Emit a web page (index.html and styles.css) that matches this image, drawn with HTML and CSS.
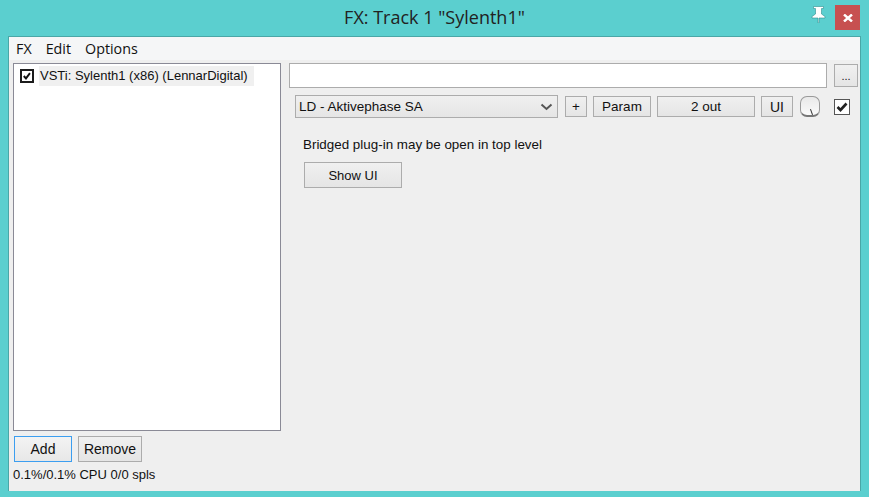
FILE: index.html
```html
<!DOCTYPE html>
<html lang="en">
<head>
  <meta charset="UTF-8">
  <title>FX: Track 1 "Sylenth1"</title>
  <link rel="stylesheet" href="styles.css">
</head>
<body>
  <div class="window">
    <div class="titlebar">
      <div class="title">FX: Track 1 "Sylenth1"</div>
      <svg class="pin" width="15" height="17" viewBox="0 0 15 17">
        <path d="M2.500 0.500h10v2h-2v5.500l3.500 2.500v1.500h-6v5h-1v-5h-6v-1.500l3.500-2.500v-5.500h-2z" fill="#fff" stroke="#2f8f8f" stroke-width="0.600"/>
      </svg>
      <div class="close">
        <svg width="10" height="8" viewBox="0 0 10 8">
          <path d="M1 0.500l8 7M9 0.500l-8 7" stroke="#fff" stroke-width="2.400"/>
        </svg>
      </div>
    </div>
    <div class="client">
      <div class="menu">
        <span>FX</span>
        <span>Edit</span>
        <span>Options</span>
      </div>
      <div class="main">
        <div class="left">
          <div class="list">
            <div class="list-item">
              <span class="check check-small">
                <svg width="10" height="8" viewBox="0 0 11 10"><path d="M1.500 5l2.700 3 5-6.500" fill="none" stroke="#111" stroke-width="2.400"/></svg>
              </span>
              <span class="list-label">VSTi: Sylenth1 (x86) (LennarDigital)</span>
            </div>
          </div>
          <div class="list-buttons">
            <button type="button" class="btn btn-add">Add</button>
            <button type="button" class="btn btn-remove">Remove</button>
          </div>
          <div class="status">0.1%/0.1% CPU 0/0 spls</div>
        </div>
        <div class="right">
          <div class="row-path">
            <div class="path-input"></div>
            <button type="button" class="btn btn-browse">...</button>
          </div>
          <div class="row-preset">
            <div class="select">
              <span>LD - Aktivephase SA</span>
              <svg width="13" height="8" viewBox="0 0 13 8"><path d="M1.500 1.500l5 4.500 5-4.500" fill="none" stroke="#555" stroke-width="2"/></svg>
            </div>
            <button type="button" class="btn btn-plus">+</button>
            <button type="button" class="btn btn-param">Param</button>
            <button type="button" class="btn btn-out">2 out</button>
            <button type="button" class="btn btn-ui">UI</button>
            <div class="knob"><div class="knob-mark"></div></div>
            <span class="check check-big">
              <svg width="12" height="10" viewBox="0 0 12 10"><path d="M1.500 5l3 3 6-6.500" fill="none" stroke="#222" stroke-width="2.600"/></svg>
            </span>
          </div>
          <div class="bridge-text">Bridged plug-in may be open in top level</div>
          <button type="button" class="btn btn-show">Show UI</button>
        </div>
      </div>
    </div>
  </div>
</body>
</html>
```

FILE: styles.css
```css
* {
  margin: 0;
  padding: 0;
  box-sizing: border-box;
}

html, body {
  width: 869px;
  height: 497px;
  overflow: hidden;
}

body {
  background-color: #5bcfcf;
  font-family: "Liberation Sans", Arial, sans-serif;
  font-size: 13px;
  color: #111;
}

.window {
  height: 497px;
  padding: 0 8px 6px 8px;
  display: flex;
  flex-flow: column nowrap;
}

.titlebar {
  position: relative;
  height: 36px;
  flex: none;
}
.title {
  position: absolute;
  left: 0;
  right: 0;
  top: 5px;
  text-align: center;
  font-family: "Open Sans", sans-serif;
  font-size: 18px;
  line-height: 24px;
  color: #222;
}
.pin {
  position: absolute;
  left: 803px;
  top: 6px;
}
.close {
  position: absolute;
  left: 827px;
  top: 5px;
  width: 25px;
  height: 25px;
  background-color: #c75050;
  display: flex;
  justify-content: center;
  align-items: center;
}

.client {
  flex: 1;
  background-color: #efefef;
  border: 1px solid #4aa7a7;
  border-bottom: 0;
  display: flex;
  flex-flow: column nowrap;
}

.menu {
  height: 23px;
  flex: none;
  background-color: #f5f6f7;
  display: flex;
  align-items: center;
  gap: 14px;
  padding: 0 0 1px 7px;
  font-family: "Open Sans", sans-serif;
  font-size: 14.300px;
  color: #111;
}

.main {
  flex: 1;
  display: flex;
  padding: 3px 2px 0 4px;
}

.left {
  width: 268px;
  flex: none;
  display: flex;
  flex-flow: column nowrap;
}
.list {
  height: 368px;
  background-color: #fff;
  border: 1px solid #8a8a96;
  padding: 2px 0 0 6px;
}
.list-item {
  display: flex;
  align-items: center;
}
.list-label {
  margin-left: 5px;
  padding: 0 6px 0 1px;
  height: 20px;
  line-height: 19px;
  background-color: #f0f0f0;
}
.list-buttons {
  display: flex;
  gap: 6px;
  margin: 5px 0 0 1px;
}
.status {
  margin-top: 5px;
  line-height: 16px;
}

.right {
  flex: 1;
  padding-left: 8px;
}
.row-path {
  display: flex;
  align-items: center;
  gap: 7px;
}
.path-input {
  width: 538px;
  height: 25px;
  background-color: #fff;
  border: 1px solid #acacac;
}
.row-preset {
  display: flex;
  align-items: center;
  gap: 6px;
  margin: 7px 0 0 6px;
}
.select {
  width: 263px;
  height: 23px;
  border: 1px solid #acacac;
  background: linear-gradient(#f0f0f0, #e5e5e5);
  display: flex;
  justify-content: space-between;
  align-items: center;
  padding: 0 4px 0 3px;
  font-size: 13.500px;
}

.btn {
  font-family: "Liberation Sans", Arial, sans-serif;
  font-size: 13.500px;
  color: #111;
  border: 1px solid #acacac;
  background: linear-gradient(#f0f0f0, #e5e5e5);
  flex: none;
}
.btn-add {
  width: 58px;
  height: 26px;
  font-size: 14px;
  border-color: #3c9ef0;
  background: linear-gradient(#f3f3f3, #e7e7e7);
}
.btn-remove {
  width: 64px;
  height: 26px;
  font-size: 14px;
}
.btn-browse {
  width: 24px;
  height: 23px;
  font-size: 11px;
}
.btn-plus {
  width: 22px;
  height: 21px;
  margin-left: 1px;
}
.btn-param {
  width: 58px;
  height: 21px;
}
.btn-out {
  width: 98px;
  height: 21px;
}
.btn-ui {
  width: 32px;
  height: 21px;
  font-size: 14px;
}
.btn-show {
  display: block;
  width: 98px;
  height: 26px;
  margin-left: 15px;
  font-size: 13px;
}

.knob {
  position: relative;
  width: 20px;
  height: 21px;
  margin-left: 1px;
  border-radius: 7px;
  border: 1px solid #9a9a9a;
  border-bottom: 2px solid #777;
  background: linear-gradient(#e9e9e9, #fafafa);
}
.knob-mark {
  position: absolute;
  left: 10px;
  top: 12px;
  width: 1px;
  height: 6px;
  background-color: #333;
  transform: rotate(-20deg);
}

.check {
  display: flex;
  justify-content: center;
  align-items: center;
  background-color: #fff;
  flex: none;
}
.check-small {
  width: 14px;
  height: 14px;
  border: 2px solid #1c1c1c;
}
.check-big {
  width: 16px;
  height: 16px;
  border: 1px solid #555;
  margin-left: 8px;
}

.bridge-text {
  margin: 19px 0 9px 14px;
  line-height: 16px;
  font-size: 13.400px;
}
```
